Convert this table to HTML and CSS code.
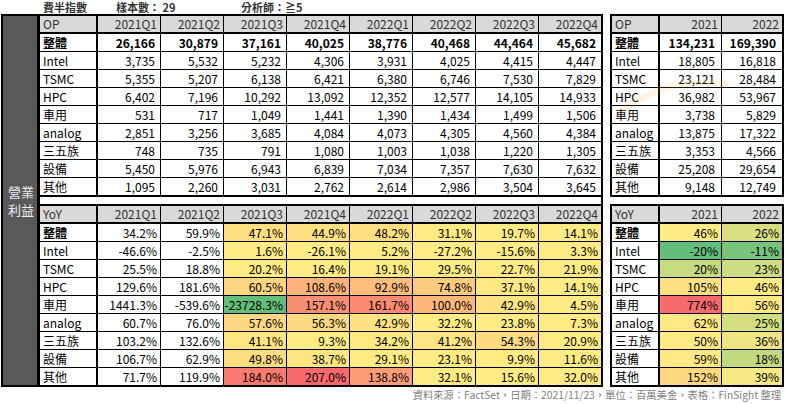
FILE: index.html
```html
<!DOCTYPE html>
<html lang="zh-Hant">
<head>
<meta charset="utf-8">
<title>費半指數 營業利益</title>
<link rel="stylesheet" href="styles.css">
</head>
<body>
<div class="page">
  <div class="title">
    <span class="t1">費半指數</span><span class="t2">樣本數： 29</span><span class="t3">分析師：≧5</span>
  </div>
  <div class="main">
    <div class="left">
      <div class="side"><span>營業<br>利益</span></div>
      <div class="tables">
        <div class="grid op">
          <div class="c h lbl">OP</div><div class="c h">2021Q1</div><div class="c h">2021Q2</div><div class="c h">2021Q3</div><div class="c h">2021Q4</div><div class="c h">2022Q1</div><div class="c h">2022Q2</div><div class="c h">2022Q3</div><div class="c h">2022Q4</div>
          <div class="c lbl b">整體</div><div class="c n b">26,166</div><div class="c n b">30,879</div><div class="c n b">37,161</div><div class="c n b">40,025</div><div class="c n b">38,776</div><div class="c n b">40,468</div><div class="c n b">44,464</div><div class="c n b">45,682</div>
          <div class="c lbl">Intel</div><div class="c n">3,735</div><div class="c n">5,532</div><div class="c n">5,232</div><div class="c n">4,306</div><div class="c n">3,931</div><div class="c n">4,025</div><div class="c n">4,415</div><div class="c n">4,447</div>
          <div class="c lbl">TSMC</div><div class="c n">5,355</div><div class="c n">5,207</div><div class="c n">6,138</div><div class="c n">6,421</div><div class="c n">6,380</div><div class="c n">6,746</div><div class="c n">7,530</div><div class="c n">7,829</div>
          <div class="c lbl">HPC</div><div class="c n">6,402</div><div class="c n">7,196</div><div class="c n">10,292</div><div class="c n">13,092</div><div class="c n">12,352</div><div class="c n">12,577</div><div class="c n">14,105</div><div class="c n">14,933</div>
          <div class="c lbl">車用</div><div class="c n">531</div><div class="c n">717</div><div class="c n">1,049</div><div class="c n">1,441</div><div class="c n">1,390</div><div class="c n">1,434</div><div class="c n">1,499</div><div class="c n">1,506</div>
          <div class="c lbl">analog</div><div class="c n">2,851</div><div class="c n">3,256</div><div class="c n">3,685</div><div class="c n">4,084</div><div class="c n">4,073</div><div class="c n">4,305</div><div class="c n">4,560</div><div class="c n">4,384</div>
          <div class="c lbl">三五族</div><div class="c n">748</div><div class="c n">735</div><div class="c n">791</div><div class="c n">1,080</div><div class="c n">1,003</div><div class="c n">1,038</div><div class="c n">1,220</div><div class="c n">1,305</div>
          <div class="c lbl">設備</div><div class="c n">5,450</div><div class="c n">5,976</div><div class="c n">6,943</div><div class="c n">6,839</div><div class="c n">7,034</div><div class="c n">7,357</div><div class="c n">7,630</div><div class="c n">7,632</div>
          <div class="c lbl">其他</div><div class="c n">1,095</div><div class="c n">2,260</div><div class="c n">3,031</div><div class="c n">2,762</div><div class="c n">2,614</div><div class="c n">2,986</div><div class="c n">3,504</div><div class="c n">3,645</div>
        </div>
        <div class="spacer"></div>
        <div class="grid yoy">
          <div class="c h lbl">YoY</div><div class="c h">2021Q1</div><div class="c h">2021Q2</div><div class="c h">2021Q3</div><div class="c h">2021Q4</div><div class="c h">2022Q1</div><div class="c h">2022Q2</div><div class="c h">2022Q3</div><div class="c h">2022Q4</div>
          <div class="c lbl b">整體</div><div class="c">34.2%</div><div class="c">59.9%</div><div class="c" style="background:rgb(254,223,130)">47.1%</div><div class="c" style="background:rgb(254,225,130)">44.9%</div><div class="c" style="background:rgb(254,223,130)">48.2%</div><div class="c" style="background:rgb(255,235,132)">31.1%</div><div class="c" style="background:rgb(255,235,132)">19.7%</div><div class="c" style="background:rgb(255,235,132)">14.1%</div>
          <div class="c lbl">Intel</div><div class="c">-46.6%</div><div class="c">-2.5%</div><div class="c" style="background:rgb(255,235,132)">1.6%</div><div class="c" style="background:rgb(255,235,132)">-26.1%</div><div class="c" style="background:rgb(255,235,132)">5.2%</div><div class="c" style="background:rgb(255,235,132)">-27.2%</div><div class="c" style="background:rgb(255,235,132)">-15.6%</div><div class="c" style="background:rgb(255,235,132)">3.3%</div>
          <div class="c lbl">TSMC</div><div class="c">25.5%</div><div class="c">18.8%</div><div class="c" style="background:rgb(255,235,132)">20.2%</div><div class="c" style="background:rgb(255,235,132)">16.4%</div><div class="c" style="background:rgb(255,235,132)">19.1%</div><div class="c" style="background:rgb(255,235,132)">29.5%</div><div class="c" style="background:rgb(255,235,132)">22.7%</div><div class="c" style="background:rgb(255,235,132)">21.9%</div>
          <div class="c lbl">HPC</div><div class="c">129.6%</div><div class="c">181.6%</div><div class="c" style="background:rgb(254,214,128)">60.5%</div><div class="c" style="background:rgb(252,178,121)">108.6%</div><div class="c" style="background:rgb(253,190,123)">92.9%</div><div class="c" style="background:rgb(253,203,126)">74.8%</div><div class="c" style="background:rgb(255,231,131)">37.1%</div><div class="c" style="background:rgb(255,235,132)">14.1%</div>
          <div class="c lbl">車用</div><div class="c">1441.3%</div><div class="c">-539.6%</div><div class="c" style="background:rgb(99,190,123)">-23728.3%</div><div class="c" style="background:rgb(250,142,114)">157.1%</div><div class="c" style="background:rgb(250,139,113)">161.7%</div><div class="c" style="background:rgb(252,184,122)">100.0%</div><div class="c" style="background:rgb(255,227,130)">42.9%</div><div class="c" style="background:rgb(255,235,132)">4.5%</div>
          <div class="c lbl">analog</div><div class="c">60.7%</div><div class="c">76.0%</div><div class="c" style="background:rgb(254,216,128)">57.6%</div><div class="c" style="background:rgb(254,217,128)">56.3%</div><div class="c" style="background:rgb(255,227,130)">42.9%</div><div class="c" style="background:rgb(255,235,132)">32.2%</div><div class="c" style="background:rgb(255,235,132)">23.8%</div><div class="c" style="background:rgb(255,235,132)">7.3%</div>
          <div class="c lbl">三五族</div><div class="c">103.2%</div><div class="c">132.6%</div><div class="c" style="background:rgb(255,228,131)">41.1%</div><div class="c" style="background:rgb(255,235,132)">9.3%</div><div class="c" style="background:rgb(255,233,132)">34.2%</div><div class="c" style="background:rgb(255,228,131)">41.2%</div><div class="c" style="background:rgb(254,218,129)">54.3%</div><div class="c" style="background:rgb(255,235,132)">20.9%</div>
          <div class="c lbl">設備</div><div class="c">106.7%</div><div class="c">62.9%</div><div class="c" style="background:rgb(254,221,129)">49.8%</div><div class="c" style="background:rgb(255,230,131)">38.7%</div><div class="c" style="background:rgb(255,235,132)">29.1%</div><div class="c" style="background:rgb(255,235,132)">23.1%</div><div class="c" style="background:rgb(255,235,132)">9.9%</div><div class="c" style="background:rgb(255,235,132)">11.6%</div>
          <div class="c lbl">其他</div><div class="c">71.7%</div><div class="c">119.9%</div><div class="c" style="background:rgb(249,122,110)">184.0%</div><div class="c" style="background:rgb(248,105,107)">207.0%</div><div class="c" style="background:rgb(251,156,117)">138.8%</div><div class="c" style="background:rgb(255,235,132)">32.1%</div><div class="c" style="background:rgb(255,235,132)">15.6%</div><div class="c" style="background:rgb(255,235,132)">32.0%</div>
        </div>
      </div>
    </div>
    <div class="right">
      <div class="rgrid op">
        <div class="c h lbl">OP</div><div class="c h">2021</div><div class="c h">2022</div>
        <div class="c lbl b">整體</div><div class="c n b">134,231</div><div class="c n b">169,390</div>
        <div class="c lbl">Intel</div><div class="c n">18,805</div><div class="c n">16,818</div>
        <div class="c lbl">TSMC</div><div class="c n">23,121</div><div class="c n">28,484</div>
        <div class="c lbl">HPC</div><div class="c n">36,982</div><div class="c n">53,967</div>
        <div class="c lbl">車用</div><div class="c n">3,738</div><div class="c n">5,829</div>
        <div class="c lbl">analog</div><div class="c n">13,875</div><div class="c n">17,322</div>
        <div class="c lbl">三五族</div><div class="c n">3,353</div><div class="c n">4,566</div>
        <div class="c lbl">設備</div><div class="c n">25,208</div><div class="c n">29,654</div>
        <div class="c lbl">其他</div><div class="c n">9,148</div><div class="c n">12,749</div>
      </div>
      <div class="rgrid yoy">
        <div class="c h lbl">YoY</div><div class="c h">2021</div><div class="c h">2022</div>
        <div class="c lbl b">整體</div><div class="c" style="background:rgb(255,234,132)">46%</div><div class="c" style="background:rgb(214,223,130)">26%</div>
        <div class="c lbl">Intel</div><div class="c" style="background:rgb(99,190,123)">-20%</div><div class="c" style="background:rgb(121,196,124)">-11%</div>
        <div class="c lbl">TSMC</div><div class="c" style="background:rgb(199,219,129)">20%</div><div class="c" style="background:rgb(206,221,129)">23%</div>
        <div class="c lbl">HPC</div><div class="c" style="background:rgb(254,224,130)">105%</div><div class="c" style="background:rgb(255,234,132)">46%</div>
        <div class="c lbl">車用</div><div class="c" style="background:rgb(248,105,107)">774%</div><div class="c" style="background:rgb(255,233,132)">56%</div>
        <div class="c lbl">analog</div><div class="c" style="background:rgb(255,232,131)">62%</div><div class="c" style="background:rgb(211,222,129)">25%</div>
        <div class="c lbl">三五族</div><div class="c" style="background:rgb(255,234,132)">50%</div><div class="c" style="background:rgb(239,230,131)">36%</div>
        <div class="c lbl">設備</div><div class="c" style="background:rgb(255,232,131)">59%</div><div class="c" style="background:rgb(194,217,128)">18%</div>
        <div class="c lbl">其他</div><div class="c" style="background:rgb(254,216,128)">152%</div><div class="c" style="background:rgb(246,232,131)">39%</div>
      </div>
    </div>
  </div>
  <div class="footer">資料來源：FactSet，日期：2021/11/23，單位：百萬美金，表格：FinSight 整理</div>
  <svg class="swoosh" width="110" height="40" viewBox="0 0 110 40" aria-hidden="true"><path d="M2 38 Q 50 2 108 10" fill="none" stroke="#f5a623" stroke-width="7" stroke-linecap="round"/></svg>
</div>
</body>
</html>
```

FILE: styles.css
```css
* { box-sizing: border-box; }
html, body { margin: 0; padding: 0; background: #fff; }
body {
  font-family: "Noto Sans CJK TC", "Noto Sans", sans-serif;
  font-size: 12px;
  color: #000;
}
.page {
  position: relative;
  width: 785px;
  height: 404px;
  overflow: hidden;
}
.title {
  display: flex;
  height: 14px;
  padding-left: 43px;
  font-size: 11px;
  line-height: 14px;
  font-weight: bold;
  color: #333;
}
.t1 { width: 73px; }
.t2 { width: 125px; }
.main {
  display: flex;
  gap: 7px;
  padding-left: 1px;
}
.left {
  display: flex;
  border: 2px solid #000;
}
.side {
  width: 37px;
  background: #595959;
  border-right: 3px solid #000;
  display: flex;
  align-items: center;
  justify-content: center;
  color: #eee;
  font-size: 13px;
  line-height: 18px;
  padding-left: 2px;
}
.tables {
  display: flex;
  flex-direction: column;
  width: 561px;
}
.spacer { height: 7px; }
.grid {
  display: grid;
  grid-template-columns: 58px repeat(7, 63px) 62px;
  grid-template-rows: 18px repeat(8, 18px) 17px;
}
.grid.op { border-bottom: 2px solid #000; }
.grid.yoy { border-top: 2px solid #000; }
.c {
  display: flex;
  align-items: center;
  justify-content: flex-end;
  padding: 0 3px 0 0;
  border-right: 1px solid #000;
  border-bottom: 1px solid #000;
  white-space: nowrap;
  line-height: 16px;
  background: #fff;
}
.c.h {
  background: #d9d9d9;
  border-bottom-width: 2px;
  color: #333;
}
.c.lbl {
  justify-content: flex-start;
  padding: 0 0 0 3px;
  border-right-width: 2px;
}
.c.n { padding-right: 5px; }
.c.b { font-weight: bold; }
.grid > .c:nth-child(9n) { border-right: 0; }
.grid > .c:nth-last-child(-n+9) { border-bottom: 0; }
.right {
  display: flex;
  flex-direction: column;
  gap: 7px;
}
.rgrid {
  display: grid;
  grid-template-columns: 48px 62px 60px;
  grid-template-rows: 18px repeat(8, 18px) 17px;
  border: 2px solid #000;
}
.rgrid > .c:nth-child(3n) { border-right: 0; }
.rgrid > .c:nth-last-child(-n+3) { border-bottom: 0; }
.rgrid > .c.n { padding-right: 6px; }
.footer {
  text-align: right;
  padding: 1px 4px 0 0;
  font-size: 10.3px;
  line-height: 14px;
  color: #7f7f7f;
}
.swoosh {
  position: absolute;
  left: 618px;
  top: 74px;
  opacity: 0.12;
  pointer-events: none;
}
```
